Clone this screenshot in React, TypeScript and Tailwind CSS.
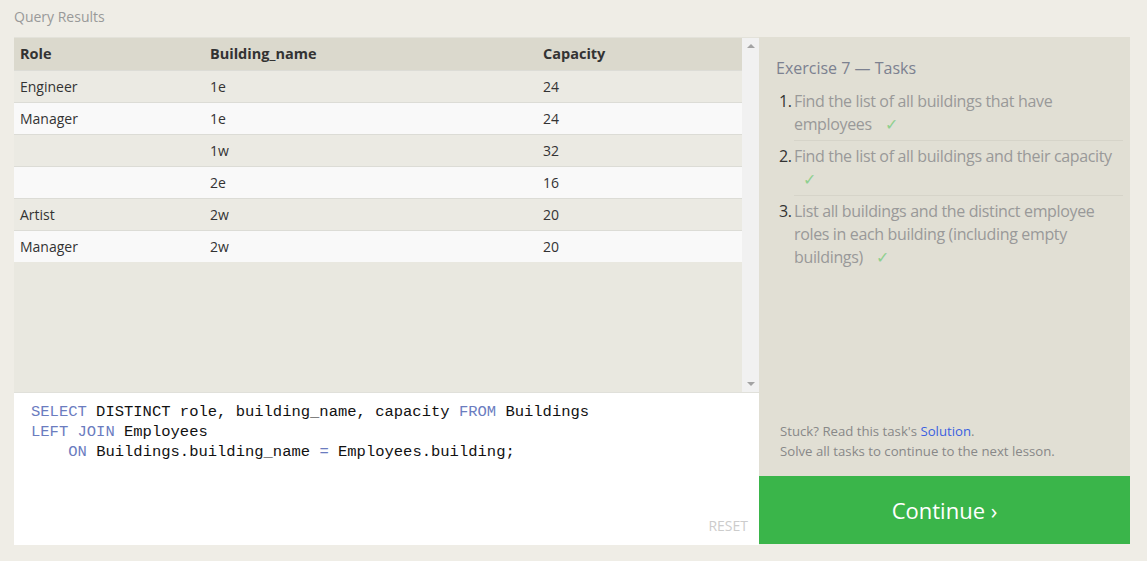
import React from "react";

const rows = [
  { role: "Engineer", building: "1e", capacity: "24" },
  { role: "Manager", building: "1e", capacity: "24" },
  { role: "", building: "1w", capacity: "32" },
  { role: "", building: "2e", capacity: "16" },
  { role: "Artist", building: "2w", capacity: "20" },
  { role: "Manager", building: "2w", capacity: "20" },
];

const tasks = [
  "Find the list of all buildings that have employees",
  "Find the list of all buildings and their capacity",
  "List all buildings and the distinct employee roles in each building (including empty buildings)",
];

const sans = { fontFamily: '"Open Sans", "Noto Sans", sans-serif' };

export default function App() {
  return (
    <div className="w-[1147px] h-[561px] bg-[#efede6] px-[14px] pt-[7px]" style={sans}>
      <div className="text-[14px] text-[#999] h-[30px] leading-[20px]">Query Results</div>

      <div className="flex w-[1116px]">
        {/* left: results + editor */}
        <div className="w-[745px] flex flex-col">
          <div className="h-[355px] flex bg-[#e9e8e0] border-t border-[#e3e2da]">
            <div className="flex-1">
              <table className="w-full border-collapse text-[14px] text-[#333]">
                <thead>
                  <tr className="bg-[#dbd9cd] h-[32px]">
                    <th className="w-[190px] text-left font-bold pl-[6px] text-[14.5px]">Role</th>
                    <th className="w-[333px] text-left font-bold pl-[6px] text-[14.5px]">Building_name</th>
                    <th className="text-left font-bold pl-[6px] text-[14.5px]">Capacity</th>
                  </tr>
                </thead>
                <tbody>
                  {rows.map((r, i) => (
                    <tr
                      key={i}
                      className={`h-[32px] border-t border-[#dcdcd6] ${i % 2 === 0 ? "bg-[#ebeae3]" : "bg-[#f9f9f9]"}`}
                    >
                      <td className="pl-[6px]">{r.role}</td>
                      <td className="pl-[6px]">{r.building}</td>
                      <td className="pl-[6px]">{r.capacity}</td>
                    </tr>
                  ))}
                </tbody>
              </table>
            </div>
            <div className="w-[17px] bg-[#f1f1f1] flex flex-col justify-between items-center py-[6px]">
              <div className="w-0 h-0 border-l-[4px] border-r-[4px] border-b-[4px] border-l-transparent border-r-transparent border-b-[#a3a3a3]" />
              <div className="w-0 h-0 border-l-[4px] border-r-[4px] border-t-[4px] border-l-transparent border-r-transparent border-t-[#a3a3a3]" />
            </div>
          </div>
          <div className="h-[153px] bg-white border-t border-[#e0e0da] relative pl-[17px] pt-[9px]">
            <pre
              className="text-[15.5px] leading-[20px] text-[#111]"
              style={{ fontFamily: '"Liberation Mono", "DejaVu Sans Mono", monospace' }}
            >
              <span className="text-[#6b7cbf]">SELECT</span> DISTINCT role, building_name, capacity{" "}
              <span className="text-[#6b7cbf]">FROM</span> Buildings{"\n"}
              <span className="text-[#6b7cbf]">LEFT JOIN</span> Employees{"\n"}
              {"    "}
              <span className="text-[#6b7cbf]">ON</span> Buildings.building_name{" "}
              <span className="text-[#6b7cbf]">=</span> Employees.building;
            </pre>
            <div className="absolute right-[11px] bottom-[9px] text-[14px] text-[#ccc]">RESET</div>
          </div>
        </div>

        {/* right: tasks */}
        <div className="w-[371px] flex flex-col">
          <div className="h-[439px] bg-[#e1dfd4] flex flex-col justify-between pl-[17px] pr-[7px] pt-[20px] pb-[15px]">
            <div>
              <div className="text-[16px] text-[#7c8190] leading-[22px] mb-[11px]">Exercise 7 — Tasks</div>
              <ol className="text-[16px] leading-[23px] tracking-[-0.35px]">
                {tasks.map((t, i) => (
                  <li key={i} className="flex">
                    <span className="w-[18px] pl-[3px] text-[#333] shrink-0">{i + 1}.</span>
                    <span
                      className={`flex-1 text-[#999] pb-[4px] mb-[4px] ${i < tasks.length - 1 ? "border-b border-[#d6d4c9]" : ""}`}
                    >
                      {t}{" "}
                      <span className="text-[#8fd08f] ml-[9px]">✓</span>
                    </span>
                  </li>
                ))}
              </ol>
            </div>
            <div className="text-[13.2px] leading-[20px] text-[#888] pl-[4px]">
              <div>
                Stuck? Read this task's <span className="text-[#3b5fe0]">Solution</span>.
              </div>
              <div>Solve all tasks to continue to the next lesson.</div>
            </div>
          </div>
          <div className="h-[68px] bg-[#3ab54a] flex items-center justify-center text-white text-[22px]">
            Continue ›
          </div>
        </div>
      </div>
    </div>
  );
}
